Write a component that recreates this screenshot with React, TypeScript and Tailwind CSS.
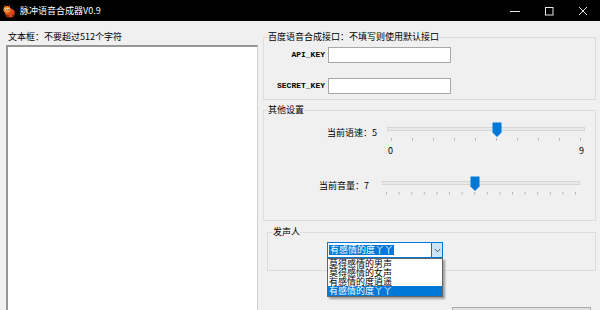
import React from "react";

const cjk = "font-['Noto_Sans_CJK_SC','Noto_Sans',sans-serif]";

function Slider({ value, max }: { value: number; max: number }) {
  const width = 198;
  const inset = 4.5;
  const travel = width - inset * 2;
  const pos = (i: number) => inset + (travel * i) / max;
  const ticks = Array.from({ length: max + 1 }, (_, i) => pos(i));
  return (
    <div className="flex flex-col w-[198px]">
      <div className="relative h-[16px]">
        <div className="mt-[5px] h-[4px] bg-[#e7eaea] border border-[#d6d6d6]" />
        <svg
          className="absolute top-0"
          style={{ left: pos(value) - 5 }}
          width="10"
          height="16"
          viewBox="0 0 10 16"
        >
          <path d="M0.5 0.5 H9.5 V10.5 L5 15 L0.5 10.5 Z" fill="#0078d7" />
        </svg>
      </div>
      <svg width="198" height="3" viewBox="0 0 198 3" className="block">
        {ticks.map((x, i) => (
          <line key={i} x1={x} y1="0" x2={x} y2="2.5" stroke="#b4b4b4" strokeWidth="1" />
        ))}
      </svg>
    </div>
  );
}

function TitleIcon() {
  return (
    <svg width="14" height="14" viewBox="0 0 14 14">
      <ellipse cx="8" cy="9" rx="5" ry="4.5" fill="#d9461b" />
      <circle cx="5" cy="5.5" r="3.6" fill="#f08a24" />
      <circle cx="4.2" cy="5.3" r="1" fill="#fff" />
      <circle cx="6.3" cy="5.3" r="1" fill="#fff" />
      <circle cx="4.3" cy="5.4" r="0.5" fill="#222" />
      <circle cx="6.4" cy="5.4" r="0.5" fill="#222" />
      <path d="M2 3 L3 0.8 L4.5 2.4 Z" fill="#b5310f" />
      <path d="M6 2.3 L7.8 0.8 L8 3.2 Z" fill="#b5310f" />
      <path d="M10 12 Q13.5 11 12.5 7" stroke="#7a2a0a" strokeWidth="1.2" fill="none" />
      <rect x="4" y="11" width="3" height="2.5" rx="1" fill="#7a2a0a" />
    </svg>
  );
}

export default function App() {
  return (
    <div className={`w-[600px] h-[310px] overflow-hidden bg-[#f0f0f0] flex flex-col text-black ${cjk}`}>
      {/* title bar */}
      <div className="h-[21px] bg-black flex items-center shrink-0">
        <div className="ml-[2px] mt-[1px]">
          <TitleIcon />
        </div>
        <span className="ml-[4px] text-[9px] leading-[12px] text-white">脉冲语音合成器V0.9</span>
        <div className="ml-auto flex h-full">
          <div className="w-[34px] flex items-center justify-center">
            <svg width="10" height="10" viewBox="0 0 10 10">
              <line x1="0" y1="5.5" x2="10" y2="5.5" stroke="#e8e8e8" strokeWidth="1" />
            </svg>
          </div>
          <div className="w-[34px] flex items-center justify-center">
            <svg width="10" height="10" viewBox="0 0 10 10">
              <rect x="1.5" y="1.5" width="7.5" height="7.5" stroke="#e8e8e8" strokeWidth="1" fill="none" />
            </svg>
          </div>
          <div className="w-[34px] flex items-center justify-center">
            <svg width="10" height="10" viewBox="0 0 10 10">
              <path d="M1 1 L9 9 M9 1 L1 9" stroke="#e8e8e8" strokeWidth="1" />
            </svg>
          </div>
        </div>
      </div>

      {/* body */}
      <div className="flex flex-1 min-h-0">
        {/* left */}
        <div className="w-[263px] shrink-0 pl-[6px] pt-[10px] flex flex-col">
          <div className="ml-[2px] text-[9px] leading-[12px]">文本框：不要超过512个字符</div>
          <div className="mt-[2px] w-[252px] h-[280px] bg-white border-t-2 border-l-2 border-[#969696] border-r border-r-[#d0d0d0]" />
        </div>

        {/* right */}
        <div className="flex-1 pt-[10px] pr-[4px] flex flex-col">
          {/* group 1 */}
          <fieldset className="border border-[#dcdcdc] pb-[5px]">
            <legend className="ml-[4px] text-[9px] leading-[12px]">百度语音合成接口：不填写则使用默认接口</legend>
            <div className="mt-[4px] flex items-center">
              <span className="w-[61px] text-right font-['Liberation_Mono',monospace] font-bold text-[8px] leading-[10px]">API_KEY</span>
              <div className="ml-[3px] w-[123px] h-[16px] bg-white border border-[#a8a8a8]" />
            </div>
            <div className="mt-[15px] flex items-center">
              <span className="w-[61px] text-right font-['Liberation_Mono',monospace] font-bold text-[8px] leading-[10px]">SECRET_KEY</span>
              <div className="ml-[3px] w-[123px] h-[16px] bg-white border border-[#a8a8a8]" />
            </div>
          </fieldset>

          {/* group 2 */}
          <fieldset className="mt-[4px] border border-[#dcdcdc] pb-[25px]">
            <legend className="ml-[4px] text-[9px] leading-[12px]">其他设置</legend>
            <div className="mt-[6px] ml-[63px] flex items-start">
              <span className="mt-[5px] w-[50px] text-[9px] leading-[12px] whitespace-nowrap">当前语速：5</span>
              <div className="ml-[10px] flex flex-col">
                <Slider value={5} max={9} />
                <div className="mt-[4px] flex justify-between px-[1px] text-[9px] leading-[12px]">
                  <span>0</span>
                  <span>9</span>
                </div>
              </div>
            </div>
            <div className="mt-[19px] ml-[55px] flex items-start">
              <span className="mt-[4px] w-[50px] text-[9px] leading-[12px] whitespace-nowrap">当前音量：7</span>
              <div className="ml-[13px]">
                <Slider value={7} max={15} />
              </div>
            </div>
          </fieldset>

          {/* group 3 */}
          <fieldset className="mt-[5px] ml-[4px] border border-[#dcdcdc] pb-[12px]">
            <legend className="ml-[5px] text-[9px] leading-[12px]">发声人</legend>
            <div className="mt-[4px] ml-[59px] relative w-[116px] h-[16px]">
              <div className="w-full h-full bg-white border border-[#0078d7] flex items-center">
                <span className="ml-[1px] px-[1px] bg-[#0078d7] text-white text-[9px] leading-[10px]">有感情的度丫丫</span>
                <div className="ml-auto w-[11px] h-full bg-[#cce4f7] border-l border-[#0078d7] flex items-center justify-center">
                  <svg width="7" height="5" viewBox="0 0 7 5">
                    <path d="M0.8 1 L3.5 3.8 L6.2 1" stroke="#555" strokeWidth="1" fill="none" />
                  </svg>
                </div>
              </div>
              <div className="absolute left-0 top-full w-[116px] bg-white border border-[#646464] shadow-[2px_2px_2px_rgba(0,0,0,0.35)] flex flex-col text-[9px] leading-[9px] z-10">
                <div className="pl-[1px] h-[9px] whitespace-nowrap">莫得感情的男声</div>
                <div className="pl-[1px] h-[9px] whitespace-nowrap">莫得感情的女声</div>
                <div className="pl-[1px] h-[9px] whitespace-nowrap">有感情的度逍遥</div>
                <div className="pl-[1px] h-[10px] whitespace-nowrap bg-[#0078d7] text-white">有感情的度丫丫</div>
              </div>
            </div>
          </fieldset>

          <div className="mt-[36px] ml-[189px] w-[139px] h-[24px] shrink-0 bg-[#e1e1e1] border border-[#adadad]" />
        </div>
      </div>
    </div>
  );
}
